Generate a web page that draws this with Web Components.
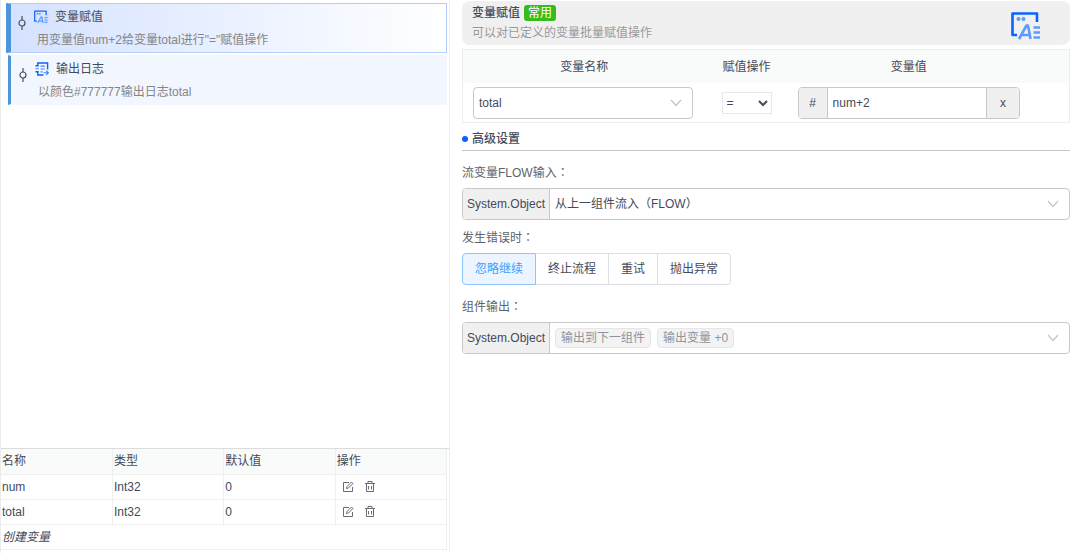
<!DOCTYPE html>
<html lang="zh-CN">
<head>
<meta charset="utf-8">
<meta name="viewport" content="width=device-width, initial-scale=1">
<title>流程编辑器</title>
<style>
  html, body { margin: 0; height: 100%; }
  body {
    font: 12px/20px "Liberation Sans", "Noto Sans CJK SC", sans-serif;
    color: #444a5a;
    background: #fff;
  }
</style>
</head>
<body>
<flow-editor>
  <step-item slot="steps" icon="assign" active>
    变量赋值
    <span slot="detail">用变量值num+2给变量total进行"="赋值操作</span>
  </step-item>
  <step-item slot="steps" icon="log">
    输出日志
    <span slot="detail">以颜色#777777输出日志total</span>
  </step-item>
  <variable-table slot="variables"></variable-table>

  <component-header slot="settings" badge="常用">
    变量赋值
    <span slot="description">可以对已定义的变量批量赋值操作</span>
  </component-header>
  <assign-table slot="settings"></assign-table>
  <section-title slot="settings">高级设置</section-title>
  <form-row slot="settings" label="流变量FLOW输入">
    <type-field type="System.Object">
      <drop-down label="流变量FLOW输入" value="从上一组件流入（FLOW）"></drop-down>
    </type-field>
  </form-row>
  <form-row slot="settings" label="发生错误时" compact>
    <choice-group label="发生错误时" options="忽略继续,终止流程,重试,抛出异常"></choice-group>
  </form-row>
  <form-row slot="settings" label="组件输出">
    <type-field type="System.Object">
      <tag-select label="组件输出" tags="输出到下一组件,输出变量 +0"></tag-select>
    </type-field>
  </form-row>
</flow-editor>

<script>
const ICONS = {
  assign: `<svg viewBox="0 0 30 30" fill="none" aria-hidden="true">
    <path d="M26 11V2.500H1.500V24H6" stroke="#0a62ff" stroke-width="2.6" stroke-linejoin="round"/>
    <g fill="#5c9bff"><circle cx="7.5" cy="8" r="2"/><circle cx="12.5" cy="8" r="2"/></g>
    <path d="M8 28 15.500 14.500H17L19.500 28M11 24H18M22.500 16.500H29M22.500 21.500H29M22.500 26.500H29" stroke="#5c9bff" stroke-width="2.6" stroke-linejoin="round"/>
  </svg>`,
  log: `<svg viewBox="0 0 30 30" fill="none" aria-hidden="true">
    <path d="M6 8V2H27V16M6 21V28H18M1 8H8M1 21H8" stroke="#0a62ff" stroke-width="3"/>
    <path d="M1 14.500H8M12 9H21M12 15H21M12 21H16M18 23H28M24 18.500 28.500 23 24 27.500" stroke="#3f86ff" stroke-width="2.6"/>
  </svg>`,
  chevron: `<svg class="chevron" viewBox="0 0 12 8" fill="none" stroke="#c0c4cc" stroke-width="1.2" aria-hidden="true"><path d="M1 1 6 6.500 11 1"/></svg>`,
  edit: `<svg viewBox="0 0 12 12" fill="none" stroke="#666c77" aria-hidden="true"><path d="M7 1.500H1.500V10.500H10.500V6"/><path d="M4.500 7.500 5 5.500 9.500 1 11 2.500 6.500 7Z"/></svg>`,
  trash: `<svg viewBox="0 0 12 12" fill="none" stroke="#666c77" aria-hidden="true"><path d="M1 2.500H11M4 2.500V.5H8V2.500M2.500 2.500V10.500H9.500V2.500M4.500 5V8.500M7.500 5V8.500"/></svg>`
};

/* Base class: renders an open shadow root from the subclass template. */
class View extends HTMLElement {
  connectedCallback() {
    if (this.shadowRoot) return;
    this.attachShadow({ mode: 'open' }).innerHTML =
      `<style>*{box-sizing:border-box}button,input,select{font:inherit;color:inherit;margin:0}svg{display:block}${this.css}</style>${this.html()}`;
  }
}

customElements.define('flow-editor', class extends View {
  css = `
    :host { display: grid; grid-template-columns: 450px minmax(0, 1fr); min-height: 100vh; }
    aside { display: flex; flex-direction: column; border: solid #ececec; border-width: 0 1px; }
    .steps { flex: 1; display: flex; flex-direction: column; gap: 2px; padding: 3px 2px 0 0; }
    .variables { border-top: 1px solid #dcdcdc; padding: 0 2px 3px 0; }
    main { padding: 1px 3px 16px 12px; }
  `;
  html() {
    return `<aside>
      <div class="steps"><slot name="steps"></slot></div>
      <div class="variables"><slot name="variables"></slot></div>
    </aside>
    <main><slot name="settings"></slot></main>`;
  }
});

customElements.define('step-item', class extends View {
  css = `
    :host { display: flex; gap: 8px; min-height: 50px; margin-left: 7px; padding: 1px 8px 0 8px; box-sizing: border-box;
      border: 1px solid transparent; border-left: 3px solid #4e95dc; background: #f2f7ff; }
    :host([active]) { margin-left: 5px; padding-left: 7px; border-color: #b3cdfc; border-left: 5px solid #4e95dc;
      background: linear-gradient(90deg, #d5e2ff, #fff); }
    .knob { width: 8px; height: 16px; margin-top: 10px; }
    .title { display: flex; align-items: center; gap: 7px; height: 24px; }
    .title svg { width: 14px; height: 14px; }
    .detail { padding-left: 3px; line-height: 22px; color: #858585; }
  `;
  html() {
    return `<svg class="knob" viewBox="0 0 8 16" fill="none" stroke="#4a4f5c" stroke-width="1.2" aria-hidden="true"><path d="M4 1V5M4 11V15"/><circle cx="4" cy="8" r="3"/></svg>
    <div>
      <div class="title">${ICONS[this.getAttribute('icon')]}<span><slot></slot></span></div>
      <div class="detail"><slot name="detail"></slot></div>
    </div>`;
  }
});

customElements.define('variable-table', class extends View {
  css = `
    :host { display: block; }
    table { width: 100%; border-collapse: collapse; table-layout: fixed; }
    th, td { height: 25px; padding: 0 1px; text-align: left; font-weight: 400; border: solid #efefef; border-width: 0 1px 1px 0; }
    th { height: 26px; background: #f9fafa; }
    .tools { display: flex; gap: 10px; padding-left: 5px; }
    button { width: 12px; height: 12px; padding: 0; border: 0; background: none; }
    svg { width: 12px; height: 12px; }
    .create { width: auto; height: 20px; font-style: italic; }
  `;
  html() {
    const row = name => `<tr><td>${name}</td><td>Int32</td><td>0</td><td><div class="tools">
      <button type="button" aria-label="编辑">${ICONS.edit}</button><button type="button" aria-label="删除">${ICONS.trash}</button></div></td></tr>`;
    return `<table>
      <thead><tr><th>名称</th><th>类型</th><th>默认值</th><th>操作</th></tr></thead>
      <tbody>${row('num')}${row('total')}<tr><td colspan="4"><button type="button" class="create">创建变量</button></td></tr></tbody>
    </table>`;
  }
});

customElements.define('component-header', class extends View {
  css = `
    :host { display: flex; justify-content: space-between; align-items: center; height: 44px; padding: 0 29px 0 10px;
      box-sizing: border-box; border-radius: 8px; background: #f0f0f0; }
    .title { display: flex; align-items: center; gap: 4px; font-weight: 500; }
    .badge { height: 16px; line-height: 16px; padding: 0 4px; border-radius: 3px; background: #38bb1c; color: #fff; font-weight: 400; }
    .description { color: #999; }
    svg { width: 30px; height: 30px; margin-top: 6px; }
  `;
  html() {
    return `<div>
      <div class="title"><span><slot></slot></span><span class="badge">${this.getAttribute('badge')}</span></div>
      <div class="description"><slot name="description"></slot></div>
    </div>${ICONS.assign}`;
  }
});

customElements.define('drop-down', class extends View {
  css = `
    :host { display: grid; align-items: center; height: 30px; }
    select { grid-area: 1 / 1; width: 100%; height: 30px; padding: 0 30px 0 5px; border: 0; border-radius: 4px;
      background: none; appearance: none; outline-offset: -1px; }
    .chevron { grid-area: 1 / 1; justify-self: end; width: 12px; height: 8px; margin-right: 10px; pointer-events: none; }
  `;
  html() {
    return `<select aria-label="${this.getAttribute('label')}"><option>${this.getAttribute('value')}</option></select>${ICONS.chevron}`;
  }
});

customElements.define('tag-select', class extends View {
  css = `
    :host { display: block; }
    button { display: flex; align-items: center; gap: 6px; width: 100%; height: 30px; padding: 0 10px 0 5px; border: 0; background: none; }
    .tag { height: 20px; line-height: 18px; padding: 0 5px; border: 1px solid #e6e6e8; border-radius: 4px; background: #f3f3f4; color: #909399; }
    .chevron { width: 12px; height: 8px; margin-left: auto; }
  `;
  html() {
    const tags = this.getAttribute('tags').split(',').map(t => `<span class="tag">${t}</span>`).join('');
    return `<button type="button" aria-haspopup="listbox" aria-label="${this.getAttribute('label')}">${tags}${ICONS.chevron}</button>`;
  }
});

customElements.define('assign-table', class extends View {
  css = `
    :host { display: block; margin-top: 4px; border: 1px solid #ebedf3; }
    table { width: 100%; border-spacing: 0; table-layout: fixed; }
    th, td { padding: 0; }
    th { height: 33px; font-weight: 400; background: #f9fafa; }
    td { height: 39px; padding: 0 10px; }
    .wide { width: 40%; }
    .tail { width: 39px; }
    drop-down { max-width: 220px; box-sizing: border-box; height: 32px; border: 1px solid #c8c8c8; border-radius: 4px; }
    .operator { padding: 0; text-align: center; }
    .operator select { width: 50px; height: 22px; border: 1px solid #e8e8ec; background: #fff; }
    .group { display: flex; height: 32px; border: 1px solid #c8c8c8; border-radius: 4px; overflow: hidden; }
    .addon { width: 29px; line-height: 30px; text-align: center; border-right: 1px solid #c8c8c8; background: #f0f0f0; }
    input { flex: 1; min-width: 0; padding: 0 5px; border: 0; }
    button { width: 33px; padding: 0; border: 0; border-left: 1px solid #c8c8c8; background: #f0f0f0; }
  `;
  html() {
    return `<table>
      <thead><tr><th class="wide">变量名称</th><th>赋值操作</th><th class="wide">变量值</th><th class="tail"></th></tr></thead>
      <tbody><tr>
        <td><drop-down label="变量名称" value="total"></drop-down></td>
        <td class="operator"><select aria-label="赋值操作"><option>=</option></select></td>
        <td><div class="group"><label class="addon" for="value">#</label><input id="value" value="num+2"><button type="button">x</button></div></td>
        <td></td>
      </tr></tbody>
    </table>`;
  }
});

customElements.define('section-title', class extends View {
  css = `
    :host { display: flex; align-items: center; gap: 4px; height: 28px; padding-top: 4px; box-sizing: border-box; border-bottom: 1px solid #c8c8c8; font-weight: 500; }
    i { width: 6px; height: 6px; border-radius: 50%; background: #0a62ff; }
  `;
  html() { return `<i></i><span><slot></slot></span>`; }
});

customElements.define('form-row', class extends View {
  css = `
    :host { display: block; padding-top: 9px; }
    :host([compact]) { padding-top: 5px; }
    .label { height: 24px; line-height: 24px; margin-bottom: 4px; color: #5f6268; }
    .colon { font-family: "Noto Sans CJK TC", sans-serif; }
  `;
  html() {
    return `<div class="label">${this.getAttribute('label')}<span class="colon" lang="zh-TW">：</span></div><slot></slot>`;
  }
});

customElements.define('type-field', class extends View {
  css = `
    :host { display: grid; grid-template-columns: auto minmax(0, 1fr); border: 1px solid #c8c8c8; border-radius: 4px; overflow: hidden; }
    span { padding: 0 4px; line-height: 30px; border-right: 1px solid #c8c8c8; background: #f0f0f0; }
  `;
  html() { return `<span>${this.getAttribute('type')}</span><slot></slot>`; }
});

customElements.define('choice-group', class extends View {
  css = `
    :host { display: flex; height: 32px; }
    label { box-sizing: border-box; padding: 0 12px; line-height: 30px; border: 1px solid #dcdfe6; border-left-width: 0; }
    label:first-of-type { border-left-width: 1px; border-radius: 4px 0 0 4px; }
    label:last-of-type { border-radius: 0 4px 4px 0; }
    label:has(:checked) { border-color: #8cc5ff; background: #ecf5ff; color: #409eff; }
    label:has(:focus-visible) { outline: 2px solid #409eff; }
    input { appearance: none; position: absolute; width: 0; height: 0; }
  `;
  connectedCallback() {
    super.connectedCallback();
    this.setAttribute('role', 'radiogroup');
    this.setAttribute('aria-label', this.getAttribute('label'));
  }
  html() {
    return this.getAttribute('options').split(',').map((o, i) =>
      `<label><input type="radio" name="choice"${i ? '' : ' checked'}>${o}</label>`).join('');
  }
});
</script>
</body>
</html>
